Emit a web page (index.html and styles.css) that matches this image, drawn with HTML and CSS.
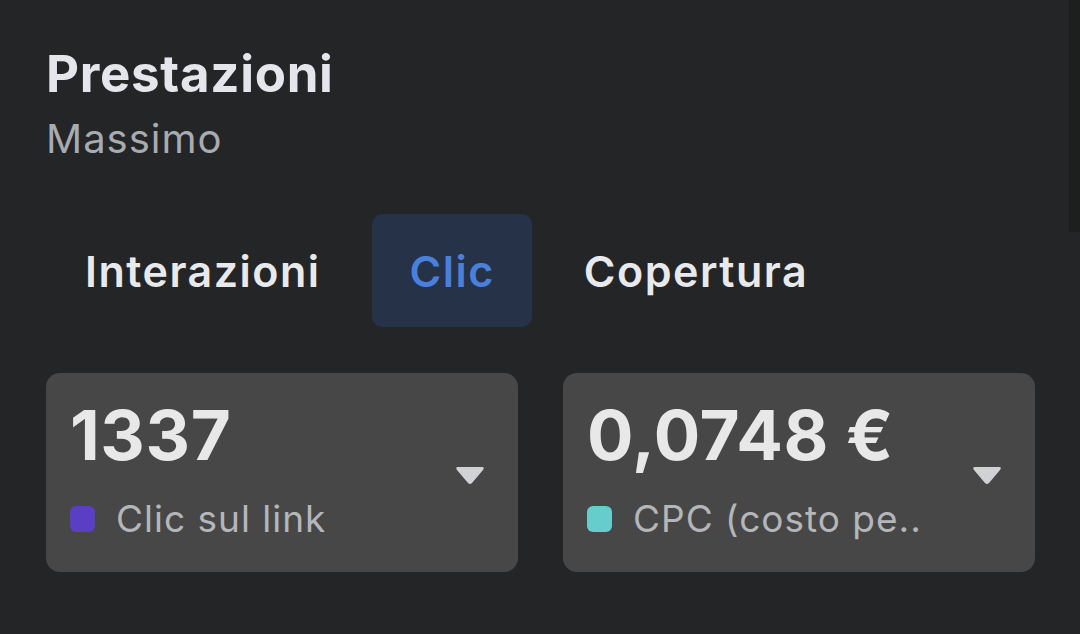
FILE: index.html
```html
<!DOCTYPE html>
<html lang="it">
<head>
<meta charset="utf-8">
<link rel="stylesheet" href="styles.css">
</head>
<body>
<div class="scrollbar"></div>
<main class="page">
  <h1 class="title">Prestazioni</h1>
  <div class="subtitle">Massimo</div>
  <nav class="tabs">
    <div class="tab">Interazioni</div>
    <div class="tab active">Clic</div>
    <div class="tab">Copertura</div>
  </nav>
  <section class="cards">
    <div class="card">
      <div class="card-body">
        <div class="value">1337</div>
        <div class="legend"><span class="dot purple"></span><span class="label">Clic sul link</span></div>
      </div>
      <svg class="chev" width="30" height="19" viewBox="0 0 30 19"><path d="M3 1 H27 Q30 1 28 4 L17 17 Q15 19 13 17 L2 4 Q0 1 3 1 Z" fill="#d0d2d5"/></svg>
    </div>
    <div class="card">
      <div class="card-body">
        <div class="value">0,0748 €</div>
        <div class="legend"><span class="dot cyan"></span><span class="label">CPC (costo pe..</span></div>
      </div>
      <svg class="chev" width="30" height="19" viewBox="0 0 30 19"><path d="M3 1 H27 Q30 1 28 4 L17 17 Q15 19 13 17 L2 4 Q0 1 3 1 Z" fill="#d0d2d5"/></svg>
    </div>
  </section>
</main>
</body>
</html>
```
FILE: styles.css
```css
html, body {
  margin: 0;
  padding: 0;
  background: #242526;
  height: 100%;
  overflow: hidden;
}
body {
  font-family: Inter, "Noto Sans", sans-serif;
  color: #e4e6eb;
  position: relative;
}
.scrollbar {
  position: absolute;
  top: 0;
  right: 0;
  width: 11px;
  height: 232px;
  background: #1d1f1f;
}
.page {
  padding: 44px 45px 0 46px;
}
.title {
  margin: 0;
  font-size: 51px;
  line-height: 60px;
  font-weight: 700;
  letter-spacing: 0.7px;
  color: #e4e6eb;
}
.subtitle {
  margin-top: 12px;
  font-size: 40px;
  line-height: 46px;
  letter-spacing: 1px;
  color: #a8abaf;
}
.tabs {
  display: flex;
  gap: 14px;
  margin-top: 52px;
  margin-left: 1px;
}
.tab {
  height: 113px;
  display: flex;
  align-items: center;
  padding: 0 37px 0 38px;
  font-size: 43px;
  font-weight: 600;
  letter-spacing: 1.5px;
  color: #e8e9ec;
  border-radius: 10px;
}
.tab.active {
  background: #253248;
  color: #4a80dc;
}
.cards {
  display: flex;
  gap: 45px;
  margin-top: 46px;
}
.card {
  flex: 1;
  height: 199px;
  background: #474747;
  border-radius: 14px;
  display: flex;
  align-items: flex-start;
  padding: 27px 33px 0 24px;
  box-sizing: border-box;
}
.card-body {
  flex: 1;
  min-width: 0;
}
.value {
  font-size: 69px;
  line-height: 70px;
  font-weight: 700;
  letter-spacing: 0.6px;
  color: #e8e8e8;
}
.legend {
  display: flex;
  align-items: center;
  gap: 21px;
  margin-top: 27px;
}
.dot {
  width: 25px;
  height: 26px;
  border-radius: 6px;
  flex: none;
}
.dot.purple { background: #5a3fc5; }
.dot.cyan { background: #66cccc; }
.label {
  font-size: 37px;
  line-height: 44px;
  letter-spacing: 1px;
  color: #b4b6b9;
  white-space: nowrap;
}
.chev {
  flex: none;
  align-self: center;
  margin-top: -22px;
}
```
